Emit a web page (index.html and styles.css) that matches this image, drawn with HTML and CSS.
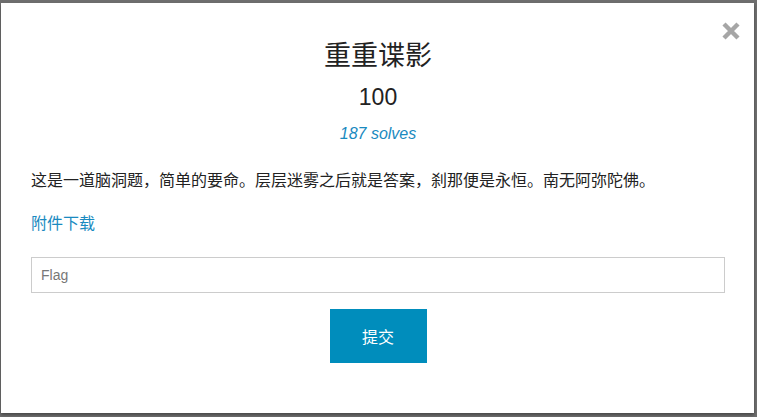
FILE: index.html
```html
<!DOCTYPE html>
<html lang="zh">
<head>
<meta charset="utf-8">
<title>重重谍影</title>
<link rel="stylesheet" href="styles.css">
</head>
<body>
<div class="modal">
  <button class="close" aria-label="关闭">
    <svg width="20" height="20" viewBox="0 0 20 20"><path d="M3 3 L17 17 M17 3 L3 17" stroke="#a6a6a6" stroke-width="4.4" stroke-linecap="butt"/></svg>
  </button>
  <h1 class="title">重重谍影</h1>
  <div class="points">100</div>
  <div class="solves">187 solves</div>
  <p class="desc">这是一道脑洞题，简单的要命。层层迷雾之后就是答案，刹那便是永恒。南无阿弥陀佛。</p>
  <a class="file" href="#">附件下载</a>
  <input class="flag" type="text" placeholder="Flag">
  <div class="actions"><button class="submit">提交</button></div>
</div>
</body>
</html>
```
FILE: styles.css
```css
html, body {
  margin: 0;
  height: 100%;
}
body {
  background: #6e6e6e;
  padding: 3px 3px 4px 1px;
  box-sizing: border-box;
  font-family: "Liberation Sans", "Noto Sans CJK SC", sans-serif;
  color: #222;
}
.modal {
  position: relative;
  background: #fff;
  height: 100%;
  box-sizing: border-box;
  padding: 36px 29px 0 30px;
  display: flex;
  flex-direction: column;
  box-shadow: 0 2px 3px rgba(0,0,0,0.35);
}
.close {
  position: absolute;
  top: 18px;
  right: 13px;
  border: 0;
  background: none;
  padding: 0;
  width: 20px;
  height: 20px;
}
.close svg { display: block; }
.title {
  margin: 0;
  text-align: center;
  font-size: 27px;
  font-weight: normal;
  line-height: 34px;
}
.points {
  text-align: center;
  font-size: 23px;
  line-height: 28px;
  margin-top: 10px;
}
.solves {
  text-align: center;
  font-style: italic;
  font-size: 16px;
  color: #1a8ac0;
  line-height: 22px;
  margin-top: 12px;
}
.desc {
  margin: 25px 0 0;
  font-size: 16px;
  line-height: 22px;
}
.file {
  color: #1a8ac0;
  text-decoration: none;
  font-size: 16px;
  line-height: 22px;
  margin-top: 21px;
  align-self: flex-start;
}
.flag {
  margin-top: 22px;
  height: 36px;
  box-sizing: border-box;
  border: 1px solid #cccccc;
  padding: 0 9px;
  font-family: "Liberation Sans", sans-serif;
  font-size: 14px;
  color: #555;
  outline: none;
}
.flag::placeholder { color: #777; }
.actions {
  display: flex;
  justify-content: center;
  margin-top: 16px;
}
.submit {
  width: 97px;
  height: 54px;
  border: 0;
  background: #008dbc;
  color: #fff;
  font-family: "Liberation Sans", "Noto Sans CJK SC", sans-serif;
  font-size: 16px;
}
```
